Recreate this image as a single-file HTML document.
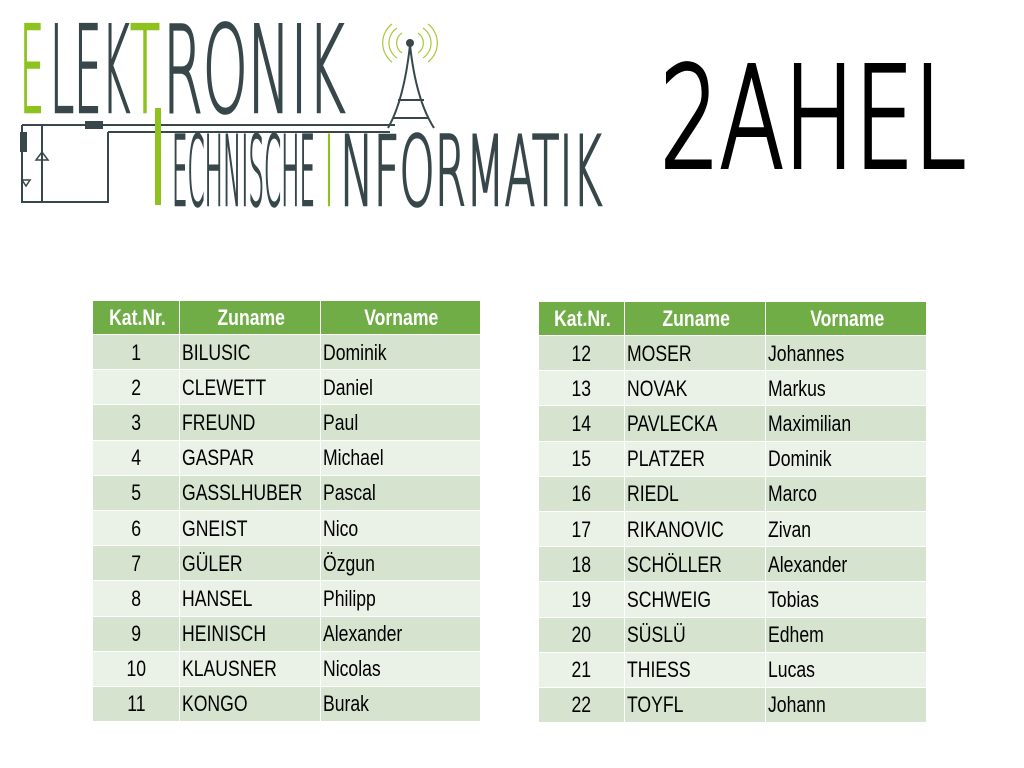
<!DOCTYPE html>
<html><head><meta charset="utf-8"><style>
body{margin:0;width:1024px;height:768px;background:#fff;position:relative;overflow:hidden;font-family:"Liberation Sans",sans-serif}
table{position:absolute;border-collapse:collapse;font-size:22px;color:#000;table-layout:fixed}
td,th{padding:0 0 0 2px;height:34.2px;border:1.5px solid #fff;line-height:33px;white-space:nowrap;overflow:visible}
th{background:#70ad47;color:#fff;font-weight:bold;text-align:center;height:32px}
td:first-child{text-align:center;padding:0}
tr:nth-child(even) td{background:#d5e3cf}
tr:nth-child(odd) td{background:#eaf1e7}
span{display:inline-block;transform:scaleX(.8);transform-origin:left center}
td:first-child span,th span{transform-origin:center}
</style></head><body>
<svg width="1024" height="230" style="position:absolute;left:0;top:0">
<g fill="none" stroke="#37474a" stroke-width="2">
<path d="M22 125H395M108 132H390M22 125V202H108V132M42 125V202"/>
<path d="M410 45 Q404 100 388 128 M410 45 Q416 100 434 128 M398 100H424 M393 118H429"/>
</g>
<rect x="20" y="132" width="7" height="20" fill="#37474a"/>
<rect x="85" y="121" width="18" height="8" fill="#37474a"/>
<path d="M36 160 L48 160 L42 152Z M22 180h8l-4 6z" fill="none" stroke="#37474a" stroke-width="1.5"/>
<circle cx="410" cy="43" r="4" fill="#37474a"/>
<g fill="none" stroke="#a8c83a" stroke-width="1.2">
<path d="M402 33a12 12 0 0 0 0 20M418 33a12 12 0 0 1 0 20M397 28a18 18 0 0 0 0 30M423 28a18 18 0 0 1 0 30M392 24a24 24 0 0 0 0 38M428 24a24 24 0 0 1 0 38"/>
</g>
<g font-family="DejaVu Sans,Liberation Sans,sans-serif" font-weight="200" stroke-width="2.5">
<g font-size="120">
<text x="20" y="112" fill="#8dc21f" stroke="#8dc21f" textLength="24" lengthAdjust="spacingAndGlyphs">E</text>
<text x="50" y="112" fill="#37474a" stroke="#37474a" textLength="80" lengthAdjust="spacingAndGlyphs">LEK</text>
<text x="130" y="112" fill="#8dc21f" stroke="#8dc21f" textLength="30" lengthAdjust="spacingAndGlyphs">T</text>
<text x="163" y="112" fill="#37474a" stroke="#37474a" textLength="182" lengthAdjust="spacingAndGlyphs">RONIK</text>
</g>
<g font-size="96">
<text x="172" y="205" fill="#37474a" stroke="#37474a" textLength="143" lengthAdjust="spacingAndGlyphs">ECHNISCHE</text>
<text x="325" y="205" fill="#8dc21f" stroke="#8dc21f" textLength="8" lengthAdjust="spacingAndGlyphs">I</text>
<text x="340" y="205" fill="#37474a" stroke="#37474a" textLength="262" lengthAdjust="spacingAndGlyphs">NFORMATIK</text>
</g>
</g>
<rect x="155" y="108" width="6" height="97" fill="#8dc21f"/>
<text x="660" y="167" font-family="DejaVu Sans,Liberation Sans,sans-serif" font-weight="200" font-size="140" stroke="#000" stroke-width="4" textLength="306" lengthAdjust="spacingAndGlyphs" fill="#000">2AHEL</text>
</svg>
<table style="left:92px;top:300px;width:388px">
<colgroup><col style="width:87px"><col style="width:141px"><col style="width:160px"></colgroup>
<tr><th><span>Kat.Nr.</span></th><th><span>Zuname</span></th><th><span>Vorname</span></th></tr>
<tr><td><span>1</span></td><td><span>BILUSIC</span></td><td><span>Dominik</span></td></tr>
<tr><td><span>2</span></td><td><span>CLEWETT</span></td><td><span>Daniel</span></td></tr>
<tr><td><span>3</span></td><td><span>FREUND</span></td><td><span>Paul</span></td></tr>
<tr><td><span>4</span></td><td><span>GASPAR</span></td><td><span>Michael</span></td></tr>
<tr><td><span>5</span></td><td><span>GASSLHUBER</span></td><td><span>Pascal</span></td></tr>
<tr><td><span>6</span></td><td><span>GNEIST</span></td><td><span>Nico</span></td></tr>
<tr><td><span>7</span></td><td><span>GÜLER</span></td><td><span>Özgun</span></td></tr>
<tr><td><span>8</span></td><td><span>HANSEL</span></td><td><span>Philipp</span></td></tr>
<tr><td><span>9</span></td><td><span>HEINISCH</span></td><td><span>Alexander</span></td></tr>
<tr><td><span>10</span></td><td><span>KLAUSNER</span></td><td><span>Nicolas</span></td></tr>
<tr><td><span>11</span></td><td><span>KONGO</span></td><td><span>Burak</span></td></tr>
</table>
<table style="left:538px;top:301px;width:388px">
<colgroup><col style="width:86px"><col style="width:141px"><col style="width:161px"></colgroup>
<tr><th><span>Kat.Nr.</span></th><th><span>Zuname</span></th><th><span>Vorname</span></th></tr>
<tr><td><span>12</span></td><td><span>MOSER</span></td><td><span>Johannes</span></td></tr>
<tr><td><span>13</span></td><td><span>NOVAK</span></td><td><span>Markus</span></td></tr>
<tr><td><span>14</span></td><td><span>PAVLECKA</span></td><td><span>Maximilian</span></td></tr>
<tr><td><span>15</span></td><td><span>PLATZER</span></td><td><span>Dominik</span></td></tr>
<tr><td><span>16</span></td><td><span>RIEDL</span></td><td><span>Marco</span></td></tr>
<tr><td><span>17</span></td><td><span>RIKANOVIC</span></td><td><span>Zivan</span></td></tr>
<tr><td><span>18</span></td><td><span>SCHÖLLER</span></td><td><span>Alexander</span></td></tr>
<tr><td><span>19</span></td><td><span>SCHWEIG</span></td><td><span>Tobias</span></td></tr>
<tr><td><span>20</span></td><td><span>SÜSLÜ</span></td><td><span>Edhem</span></td></tr>
<tr><td><span>21</span></td><td><span>THIESS</span></td><td><span>Lucas</span></td></tr>
<tr><td><span>22</span></td><td><span>TOYFL</span></td><td><span>Johann</span></td></tr>
</table>
</body></html>
